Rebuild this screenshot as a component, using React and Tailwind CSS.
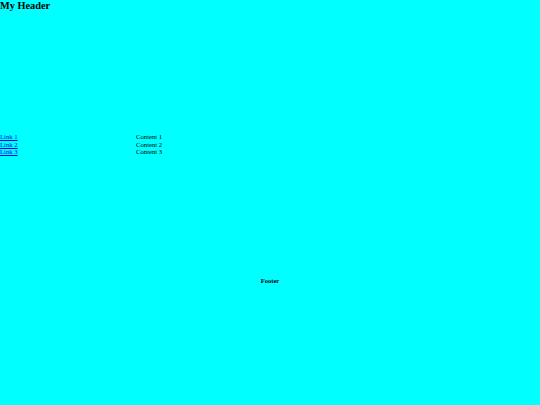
const App = () => {
  const links = ['Link 1', 'Link 2', 'Link 3'];
  const items = ['Content 1', 'Content 2', 'Content 3'];

  return (
    <div className="flex min-h-screen flex-col bg-[#00ffff] font-['Liberation_Serif',serif] text-black">
      <header className="h-[133px]">
        <h1 className="text-[10.3px] font-bold leading-[1.15]">My Header</h1>
      </header>

      <main className="grid grid-cols-[136px_1fr] text-[6.7px] leading-[7.5px]">
        <nav className="flex flex-col">
          {links.map((l) => (
            <a key={l} href="#" className="text-[#0000ee] underline">
              {l}
            </a>
          ))}
        </nav>
        <div className="flex flex-col">
          {items.map((c) => (
            <div key={c}>{c}</div>
          ))}
        </div>
      </main>

      <footer className="flex flex-1 items-center justify-center">
        <p className="text-[6.5px] font-bold leading-[1.15]">Footer</p>
      </footer>
    </div>
  );
};

export default App;
